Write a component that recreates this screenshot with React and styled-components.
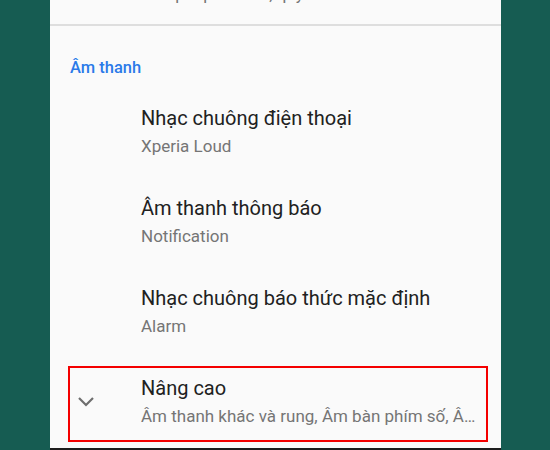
import React from "react";
import styled, { createGlobalStyle } from "styled-components";

const Global = createGlobalStyle`
  html, body { margin: 0; padding: 0; }
  body {
    background: #165c52;
    font-family: Roboto, "Noto Sans", "Liberation Sans", sans-serif;
    overflow: hidden;
  }
`;

const Stage = styled.div`
  width: 550px;
  height: 450px;
  display: flex;
  justify-content: flex-start;
  background: #165c52;
`;

const Panel = styled.div`
  margin-left: 50px;
  width: 451px;
  height: 448px;
  background: #fafafa;
  border-bottom: 2px solid #1d1d1d;
  overflow: hidden;
  display: flex;
  flex-direction: column;
`;

const TopRest = styled.div`
  padding-left: 91px;
  border-bottom: 2px solid #dedede;
  box-sizing: border-box;
  height: 26px;
`;

const Subtitle = styled.div`
  font-size: 17px;
  line-height: 20px;
  color: #757575;
  white-space: nowrap;
  overflow: hidden;
  text-overflow: ellipsis;
  margin-top: ${(p) => p.$offset || 0}px;
`;

const Category = styled.div`
  padding: 32px 0 8px 20px;
  font-size: 16.5px;
  line-height: 20px;
  font-weight: 500;
  color: #2a7ae9;
`;

const Row = styled.div`
  position: relative;
  height: 90px;
  box-sizing: border-box;
  padding: 20px 21px 0 0;
  display: flex;
  align-items: flex-start;
`;

const IconSlot = styled.div`
  width: 91px;
  flex: none;
  height: 49px;
  display: flex;
  align-items: center;
  padding-left: 27px;
  box-sizing: border-box;
`;

const Texts = styled.div`
  flex: 1;
  min-width: 0;
  display: flex;
  flex-direction: column;
  gap: 6px;
`;

const Title = styled.div`
  font-size: 20px;
  line-height: 24px;
  color: #212121;
  white-space: nowrap;
`;

const Highlight = styled.div`
  position: absolute;
  left: 18px;
  top: 10px;
  width: 420px;
  height: 76px;
  border: 2px solid #f40000;
  box-sizing: border-box;
  pointer-events: none;
`;

const Chevron = () => (
  <svg width="18" height="12" viewBox="0 0 18 12">
    <polyline
      points="2,3 9,10 16,3"
      fill="none"
      stroke="#6e6e6e"
      strokeWidth="2.2"
    />
  </svg>
);

const items = [
  { title: "Nhạc chuông điện thoại", sub: "Xperia Loud" },
  { title: "Âm thanh thông báo", sub: "Notification" },
  { title: "Nhạc chuông báo thức mặc định", sub: "Alarm" },
];

export default function App() {
  return (
    <>
      <Global />
      <Stage>
        <Panel>
          <TopRest>
            <Subtitle $offset={-16}>Cho phép ưu tiên, quy tắc</Subtitle>
          </TopRest>
          <Category>Âm thanh</Category>
          {items.map((it) => (
            <Row key={it.title}>
              <IconSlot />
              <Texts>
                <Title>{it.title}</Title>
                <Subtitle>{it.sub}</Subtitle>
              </Texts>
            </Row>
          ))}
          <Row>
            <IconSlot>
              <Chevron />
            </IconSlot>
            <Texts>
              <Title>Nâng cao</Title>
              <Subtitle>Âm thanh khác và rung, Âm bàn phím số, Âm thanh khi sạc</Subtitle>
            </Texts>
            <Highlight />
          </Row>
        </Panel>
      </Stage>
    </>
  );
}
